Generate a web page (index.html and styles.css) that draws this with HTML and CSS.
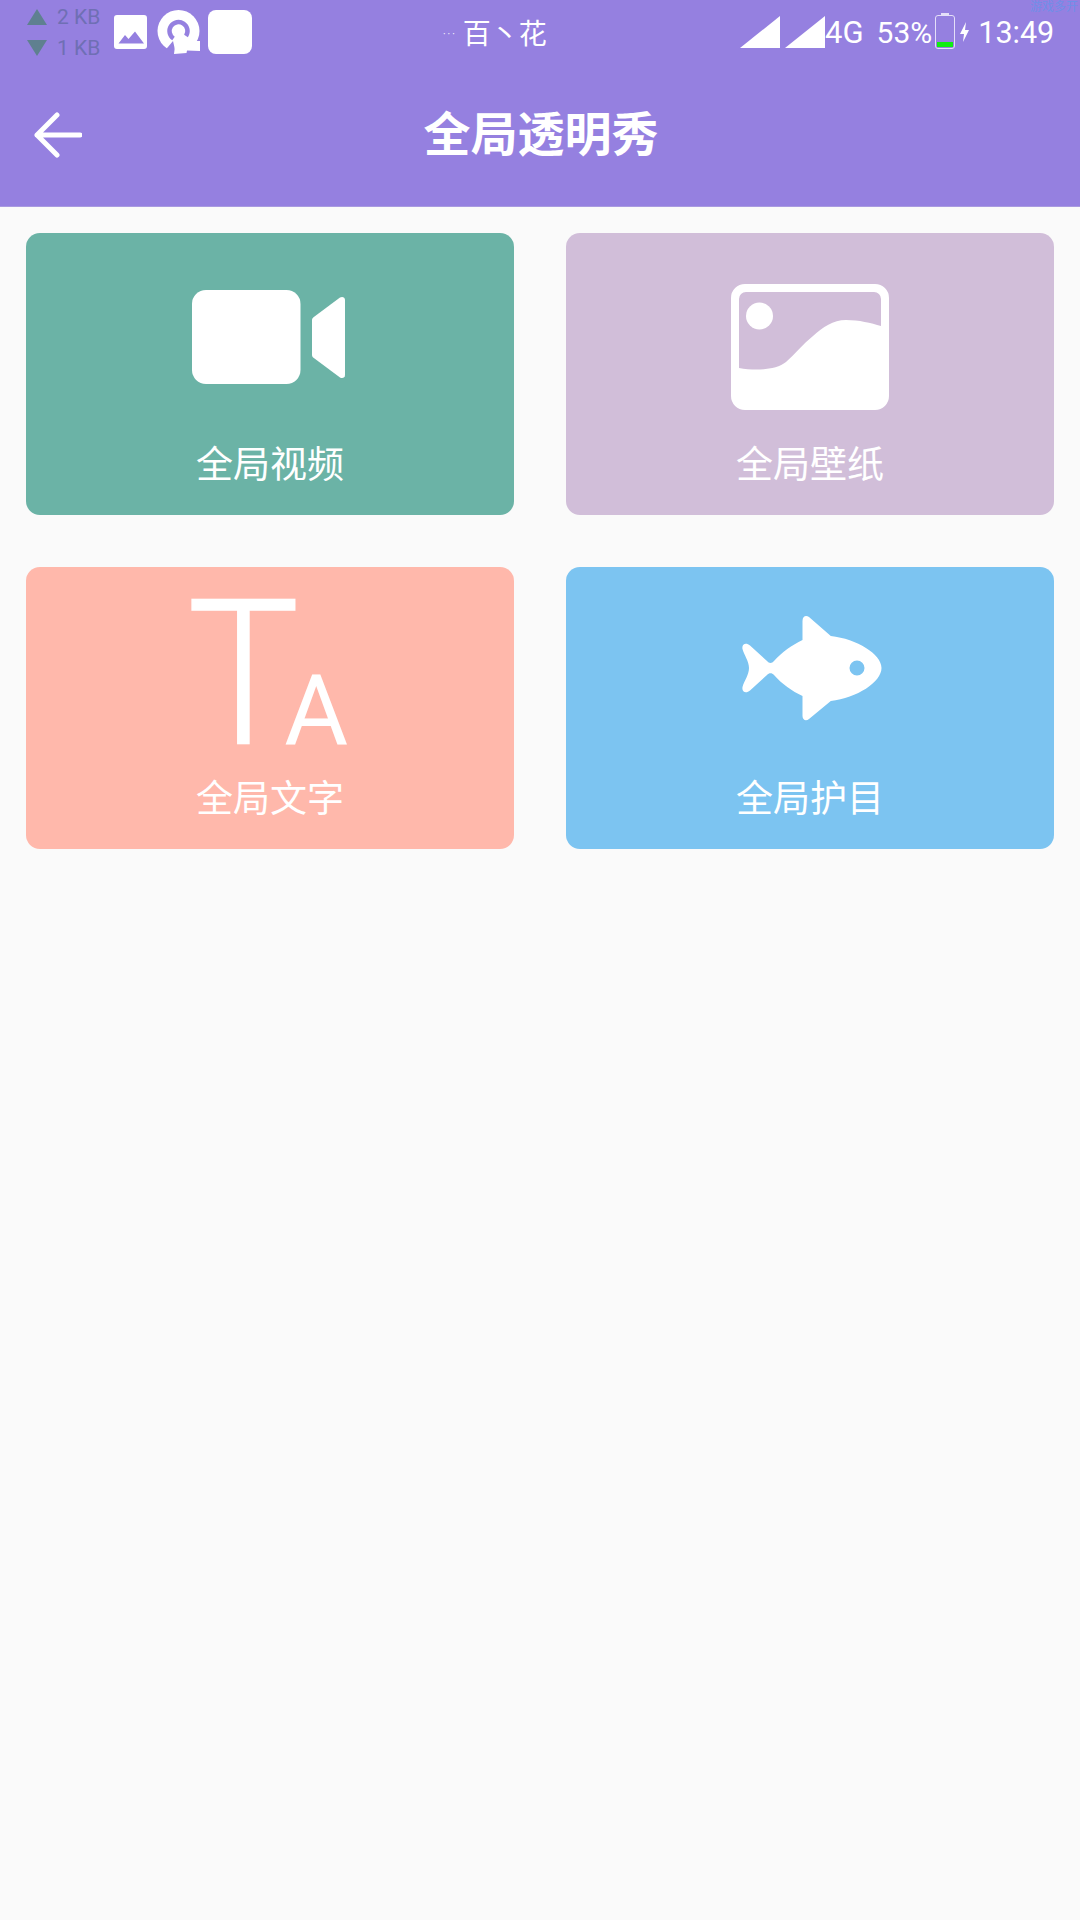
FILE: index.html
```html
<!DOCTYPE html>
<html lang="zh">
<head>
  <meta charset="UTF-8" />
  <title>全局透明秀</title>
  <link rel="stylesheet" href="styles.css">
</head>
<body>

  <header class="appbar">
    <!-- status bar -->
    <div class="status">
      <div class="speed">
        <div class="speed-row"><span class="tri tri-up"></span><span>2 KB</span></div>
        <div class="speed-row"><span class="tri tri-down"></span><span>1 KB</span></div>
      </div>
      <svg class="ic-photo" viewBox="0 0 33 34">
        <path fill="#fff" fill-rule="evenodd" d="M3 0H30A3 3 0 0 1 33 3V31A3 3 0 0 1 30 34H3A3 3 0 0 1 0 31V3A3 3 0 0 1 3 0ZM4.500 28.500H30L21 16.500L14.500 24L11 20Z"/>
      </svg>
      <svg class="ic-ring" viewBox="0 0 44 44">
        <circle fill="#fff" cx="21.500" cy="21" r="21"/>
        <path fill="#9580e0" d="M6 44L8 40.500L16 31L19 44Z"/>
        <path fill="#fff" d="M19 28H33L35 31H43V41L30 40.500L29.500 43L17 44Z"/>
        <path fill="none" stroke="#9580e0" stroke-width="4.500" d="M16.500 28.500A9 9 0 1 1 29 26"/>
      </svg>
      <div class="ic-blank"></div>
      <div class="carrier"><span class="dots">···</span>百丶花</div>
      <svg class="ic-signal" viewBox="0 0 40 32"><path fill="#fff" d="M0 32L40 0V32Z"/></svg>
      <svg class="ic-signal sig2" viewBox="0 0 40 32"><path fill="#fff" d="M0 32L40 0V32Z"/></svg>
      <span class="net">4G</span>
      <span class="pct">53%</span>
      <div class="battery"><div class="battery-level"></div></div>
      <svg class="ic-bolt" viewBox="0 0 9 20"><path fill="#fff" d="M6 0L0 12H4L3 20L9 8H5Z"/></svg>
      <span class="clock">13:49</span>
      <span class="tiny">游戏多开</span>
    </div>

    <!-- title row -->
    <div class="toolbar">
      <svg class="ic-back" viewBox="0 0 48 46">
        <path fill="none" stroke="#fff" stroke-width="5" stroke-linecap="round" stroke-linejoin="round" d="M23 3L3 23L23 43M3 23H46"/>
      </svg>
      <h1 class="title">全局透明秀</h1>
    </div>
  </header>

  <main class="grid">
    <a class="card card-video">
      <div class="card-icon">
        <svg class="ic-video" viewBox="0 0 153 94">
          <rect fill="#fff" width="108.500" height="94" rx="14"/>
          <path fill="#fff" d="M120 30C120 29 120.500 28 121.500 27.200L148 7.500C150.500 6 153 7.500 153 10V85C153 87.500 150.500 89 148 87.500L121.500 67.800C120.500 67 120 66 120 65Z"/>
        </svg>
      </div>
      <span class="card-label">全局视频</span>
    </a>

    <a class="card card-wall">
      <div class="card-icon">
        <svg class="ic-wall" viewBox="0 0 158 126">
          <path fill="#fff" fill-rule="evenodd" d="M14 0H144A14 14 0 0 1 158 14V112A14 14 0 0 1 144 126H14A14 14 0 0 1 0 112V14A14 14 0 0 1 14 0ZM15 8A7 7 0 0 0 8 15V84C25 87 45 86 55 78C64 70 72 60 82 52C92 43 102 36 115 36C128 36 140 39 150 42V15A7 7 0 0 0 143 8Z"/>
          <circle fill="#fff" cx="28.500" cy="32" r="13.500"/>
        </svg>
      </div>
      <span class="card-label">全局壁纸</span>
    </a>

    <a class="card card-text">
      <div class="card-icon">
        <div class="ic-text"><span class="big-t">T</span><span class="small-a">A</span></div>
      </div>
      <span class="card-label">全局文字</span>
    </a>

    <a class="card card-eye">
      <div class="card-icon">
        <svg class="ic-fish" viewBox="0 0 140 105">
          <path fill="#fff" fill-rule="evenodd" d="M0.500 33C-0.500 28 4 26 8 29.500L25 45C27 47.500 30 47.500 32 45C40 36 50 29 60.500 24V5C60.500 0 64 -1 67 1L88.800 20C115 23 139.500 38 139.500 52C139.500 66 115 82 88.800 85L67 103C64 105.500 60.500 104 60.500 100V80C50 75 40 68 32 59C30 56.500 27 56.500 25 59L8 74.500C4 78 -0.500 76 0.500 71C2 65 7 59 7 52C7 45 2 39 0.500 33ZM115 44.500A7.500 7.500 0 1 0 115 59.500A7.500 7.500 0 1 0 115 44.500Z"/>
        </svg>
      </div>
      <span class="card-label">全局护目</span>
    </a>
  </main>

</body>
</html>
```

FILE: styles.css
```css
* { box-sizing: border-box; }

html, body {
  margin: 0;
  height: 100%;
}

body {
  width: 1080px;
  height: 1920px;
  overflow: hidden;
  background: #fafafa;
  font-family: Roboto, "Noto Sans CJK SC", sans-serif;
  color: #fff;
}

.appbar {
  height: 207px;
  background: #9580e0;
  border-bottom: 1px solid #a99ae0;
}

/* status bar */
.status {
  position: relative;
  display: flex;
  align-items: center;
  height: 64px;
  padding-left: 27px;
}

.speed {
  width: 87px;
  display: flex;
  flex-direction: column;
  gap: 7px;
  font-size: 21px;
  line-height: 24px;
  color: #6f6fb4;
}

.speed-row {
  display: flex;
  align-items: center;
  gap: 10px;
}

.tri {
  width: 0;
  height: 0;
  border-left: 10px solid transparent;
  border-right: 10px solid transparent;
}

.tri-up { border-bottom: 16px solid #5f8090; }
.tri-down { border-top: 16px solid #5f8090; }

.ic-photo { width: 33px; height: 34px; flex: none; }
.ic-ring { width: 44px; height: 44px; flex: none; margin-left: 10px; }

.ic-blank {
  width: 44px;
  height: 44px;
  flex: none;
  margin-left: 7px;
  background: #fff;
  border-radius: 8px;
}

.carrier {
  width: 488px;
  padding-left: 191px;
  font-size: 28px;
}

.dots {
  font-size: 10px;
  letter-spacing: 2px;
  margin-right: 6px;
  vertical-align: 6px;
}

.ic-signal { width: 40px; height: 32px; flex: none; }
.sig2 { margin-left: 5px; }

.net { font-size: 31px; }
.pct { font-size: 30px; margin-left: 13px; }
.clock { font-size: 30.500px; margin-left: 9px; }

.battery {
  position: relative;
  width: 20px;
  height: 34px;
  flex: none;
  margin-left: 3px;
  border: 1px solid #e4dff8;
  border-radius: 3px;
}

.battery::before {
  content: "";
  position: absolute;
  top: -3px;
  left: 5px;
  width: 8px;
  height: 2px;
  background: #e4dff8;
}

.battery-level {
  position: absolute;
  left: 1px;
  right: 1px;
  bottom: 1px;
  height: 5px;
  background: #10ee10;
}

.ic-bolt { width: 9px; height: 20px; flex: none; margin-left: 5px; }

.tiny {
  position: absolute;
  top: 1px;
  right: 2px;
  font-size: 12px;
  line-height: 12px;
  color: #6f8fe8;
}

/* title row */
.toolbar {
  position: relative;
  display: flex;
  align-items: center;
  justify-content: center;
  height: 142px;
  padding-left: 2px;
}

.ic-back {
  position: absolute;
  left: 34px;
  top: 48px;
  width: 48px;
  height: 46px;
}

.title {
  margin: 0;
  font-size: 47px;
  font-weight: 700;
  line-height: 60px;
}

/* cards */
.grid {
  display: grid;
  grid-template-columns: 488px 488px;
  grid-auto-rows: 282px;
  gap: 52px;
  padding: 26px 26px 0;
}

.card {
  display: flex;
  flex-direction: column;
  align-items: center;
  border-radius: 14px;
}

.card-video { background: #6bb3a6; }
.card-wall { background: #d1bed9; }
.card-text { background: #ffb8ab; }
.card-eye { background: #7cc4f1; }

.card-icon {
  height: 208px;
  width: 100%;
  display: flex;
  justify-content: center;
  align-items: flex-start;
}

.card-label {
  font-size: 37px;
  line-height: 50px;
}

.ic-video { width: 153px; height: 94px; margin: 57px 0 0 -4px; }
.ic-wall { width: 158px; height: 126px; margin-top: 51px; }
.ic-fish { width: 140px; height: 105px; margin: 49px 0 0 4px; }

.ic-text {
  display: flex;
  align-items: baseline;
  margin: 33px 0 0 -9px;
  font-family: Roboto, sans-serif;
}

.big-t {
  margin-right: -19px;
  font-size: 202px;
  font-weight: 300;
  line-height: 150px;
  -webkit-text-stroke: 1.500px #fff;
  transform: scaleX(.93);
}

.small-a {
  font-size: 98px;
  line-height: 100px;
}
```
